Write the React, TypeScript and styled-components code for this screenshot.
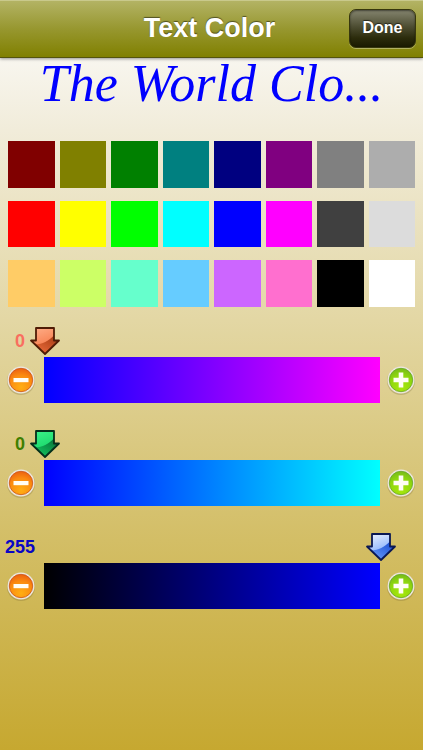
import React, { useState } from "react";
import styled, { createGlobalStyle } from "styled-components";

const GlobalStyle = createGlobalStyle`
  *, *::before, *::after { box-sizing: border-box; }
  body {
    margin: 0;
    font-family: "Liberation Sans", Arial, Helvetica, sans-serif;
  }
`;

const Screen = styled.div`
  min-height: 100vh;
  background: linear-gradient(#f8f6ef 58px, #f1ecda 130px, #e3d7a4 320px, #d3be66 540px, #c6a830 100%);
`;

const Header = styled.header`
  display: grid;
  grid-template-columns: 72px 1fr 72px;
  align-items: center;
  height: 58px;
  padding: 0 7px 2px 3px;
  border-top: 1px solid #c9c98c;
  border-bottom: 1px solid #54540c;
  background: linear-gradient(#b3b364, #97972f 50%, #808000);
  box-shadow: 0 1px 3px rgba(0, 0, 0, 0.4);
`;

const Title = styled.h1`
  grid-column: 2;
  margin: 0;
  color: #fff;
  font-size: 27px;
  line-height: 32px;
  text-align: center;
  text-shadow: 0 -1px 1px rgba(0, 0, 0, 0.5);
`;

const DoneButton = styled.button`
  justify-self: end;
  width: 67px;
  height: 39px;
  padding: 0;
  border: 1px solid #37370d;
  border-radius: 7px;
  background: linear-gradient(#85856f, #4d4d32 45%, #2c2c0c 75%, #1a1a00);
  box-shadow: 0 1px 0 rgba(255, 255, 255, 0.35), inset 0 1px 2px rgba(0, 0, 0, 0.5);
  color: #fff;
  font: bold 16px "Liberation Sans", Arial, sans-serif;
  text-shadow: 0 -1px 1px rgba(0, 0, 0, 0.6);
  cursor: pointer;
`;

const Preview = styled.p<{ $color: string }>`
  height: 83px;
  margin: 0;
  color: ${(p) => p.$color};
  font: italic 52px/52px Zapfino, "Liberation Serif", "Times New Roman", serif;
  text-align: center;
  white-space: nowrap;
`;

const Palette = styled.div`
  display: grid;
  grid-template-columns: repeat(8, 1fr);
  gap: 13px 5px;
  padding: 0 8px;
`;

const Swatch = styled.button<{ $color: string }>`
  aspect-ratio: 1;
  padding: 0;
  border: 0;
  background: ${(p) => p.$color};
  cursor: pointer;
`;

const Sliders = styled.div`
  display: grid;
  gap: 27px;
  padding: 20px 0 24px;
`;

const Channel = styled.div`
  display: grid;
  grid-template-columns: 44px 1fr 43px;
  grid-template-rows: 30px 46px;
  align-items: center;
`;

const Value = styled.label<{ $color: string }>`
  align-self: start;
  width: 40px;
  color: ${(p) => p.$color};
  font-size: 18px;
  font-weight: bold;
  line-height: 28px;
  text-align: center;
`;

const Track = styled.div`
  position: relative;
  grid-column: 2;
  grid-row: 1 / 3;
  align-self: stretch;
  padding-top: 30px;
`;

const Bar = styled.div<{ $from: string; $to: string }>`
  height: 46px;
  background: linear-gradient(90deg, ${(p) => p.$from}, ${(p) => p.$to});
`;

const Pointer = styled.svg`
  position: absolute;
  top: 0;
  width: 30px;
  height: 29px;
  margin-left: -14px;
`;

const Range = styled.input`
  position: absolute;
  inset: 0;
  width: 100%;
  height: 100%;
  margin: 0;
  opacity: 0;
  cursor: pointer;
`;

const StepButton = styled.button`
  display: flex;
  grid-row: 2;
  justify-content: center;
  width: 42px;
  padding: 0;
  border: 0;
  background: none;
  cursor: pointer;
`;

function StepIcon({ plus, id }: { plus?: boolean; id: string }) {
  return (
    <svg width="30" height="30" viewBox="0 0 30 30" aria-hidden="true">
      <defs>
        <radialGradient id={id} cx="50%" cy="80%" r="85%">
          <stop offset="0" stopColor={plus ? "#a8e80c" : "#ffae14"} />
          <stop offset="0.6" stopColor={plus ? "#8ed60e" : "#fb8a10"} />
          <stop offset="1" stopColor={plus ? "#72b81c" : "#e95a10"} />
        </radialGradient>
      </defs>
      <circle cx="15" cy="16" r="14" fill="#6b5d2c" opacity="0.25" />
      <circle cx="15" cy="15" r="13.5" fill="#ece6dc" />
      <circle cx="15" cy="15" r="11.7" fill={`url(#${id})`} stroke={plus ? "#68a528" : "#c9561a"} strokeWidth="0.8" />
      <path d={plus ? "M12.7 7.5h4.600v5.200h5.200v4.600h-5.200v5.200h-4.600v-5.200H7.500v-4.600h5.200z" : "M7.500 13h15v4.200h-15z"} fill="#fffdf6" />
    </svg>
  );
}

interface ChannelSpec {
  name: string;
  text: string;
  light: string;
  mid: string;
  dark: string;
  line: string;
}

const CHANNELS: ChannelSpec[] = [
  { name: "Red", text: "#f96f5f", light: "#ffb08a", mid: "#f4713f", dark: "#a63c14", line: "#4f1c06" },
  { name: "Green", text: "#3f7f00", light: "#3df58b", mid: "#12cf62", dark: "#08713a", line: "#052f1b" },
  { name: "Blue", text: "#0a06c4", light: "#f0f5ff", mid: "#6ea0fb", dark: "#1c50d4", line: "#0a1854" },
];

const COLORS = [
  "#800000", "#808000", "#008000", "#008080", "#000080", "#800080", "#808080", "#adadad",
  "#ff0000", "#ffff00", "#00ff00", "#00ffff", "#0000ff", "#ff00ff", "#404040", "#dcdcdc",
  "#ffcc66", "#ccff66", "#66ffcc", "#66ccff", "#cc66ff", "#ff6fcf", "#000000", "#ffffff",
];

const toRgb = (c: number[]) => `rgb(${c.join(", ")})`;
const parseHex = (hex: string) => [1, 3, 5].map((i) => parseInt(hex.slice(i, i + 2), 16));

export default function App() {
  const [color, setColor] = useState([0, 0, 255]);

  const withChannel = (index: number, value: number) =>
    color.map((v, i) => (i === index ? Math.max(0, Math.min(255, value)) : v));

  return (
    <Screen>
      <GlobalStyle />
      <Header>
        <Title>Text Color</Title>
        <DoneButton type="button">Done</DoneButton>
      </Header>
      <main>
        <Preview $color={toRgb(color)}>The World Clo...</Preview>
        <Palette>
          {COLORS.map((hex) => (
            <Swatch key={hex} type="button" $color={hex} aria-label={hex} onClick={() => setColor(parseHex(hex))} />
          ))}
        </Palette>
        <Sliders>
          {CHANNELS.map((ch, i) => {
            const id = ch.name.toLowerCase();
            return (
              <Channel key={id}>
                <Value htmlFor={id} $color={ch.text}>{color[i]}</Value>
                <StepButton type="button" aria-label={`Less ${id}`} onClick={() => setColor(withChannel(i, color[i] - 1))}>
                  <StepIcon id={`${id}-minus`} />
                </StepButton>
                <Track>
                  <Bar $from={toRgb(withChannel(i, 0))} $to={toRgb(withChannel(i, 255))} />
                  <Pointer viewBox="0 0 30 29" aria-hidden="true" style={{ left: `${(color[i] / 255) * 100}%` }}>
                    <defs>
                      <linearGradient id={`${id}-body`} x1="0" y1="0" x2="0.4" y2="1">
                        <stop offset="0" stopColor={ch.light} />
                        <stop offset="1" stopColor={ch.mid} />
                      </linearGradient>
                      <linearGradient id={`${id}-shade`} x1="0" y1="1" x2="0.8" y2="0">
                        <stop offset="0" stopColor={ch.mid} />
                        <stop offset="1" stopColor={ch.dark} />
                      </linearGradient>
                    </defs>
                    <path d="M6 1h18v12.500H29L15 27 1 13.500h5z" fill={`url(#${id}-body)`} />
                    <path d="M24 8.500V13.500H29L15 27 5 17.500C13 17 18 14 24 8.500z" fill={`url(#${id}-shade)`} />
                    <path d="M6 1h18v12.500H29L15 27 1 13.500h5z" fill="none" stroke={ch.line} strokeWidth="1.800" strokeLinejoin="round" />
                  </Pointer>
                  <Range
                    id={id}
                    type="range"
                    min={0}
                    max={255}
                    value={color[i]}
                    aria-label={ch.name}
                    onChange={(e) => setColor(withChannel(i, Number(e.target.value)))}
                  />
                </Track>
                <StepButton type="button" aria-label={`More ${id}`} onClick={() => setColor(withChannel(i, color[i] + 1))}>
                  <StepIcon plus id={`${id}-plus`} />
                </StepButton>
              </Channel>
            );
          })}
        </Sliders>
      </main>
    </Screen>
  );
}
